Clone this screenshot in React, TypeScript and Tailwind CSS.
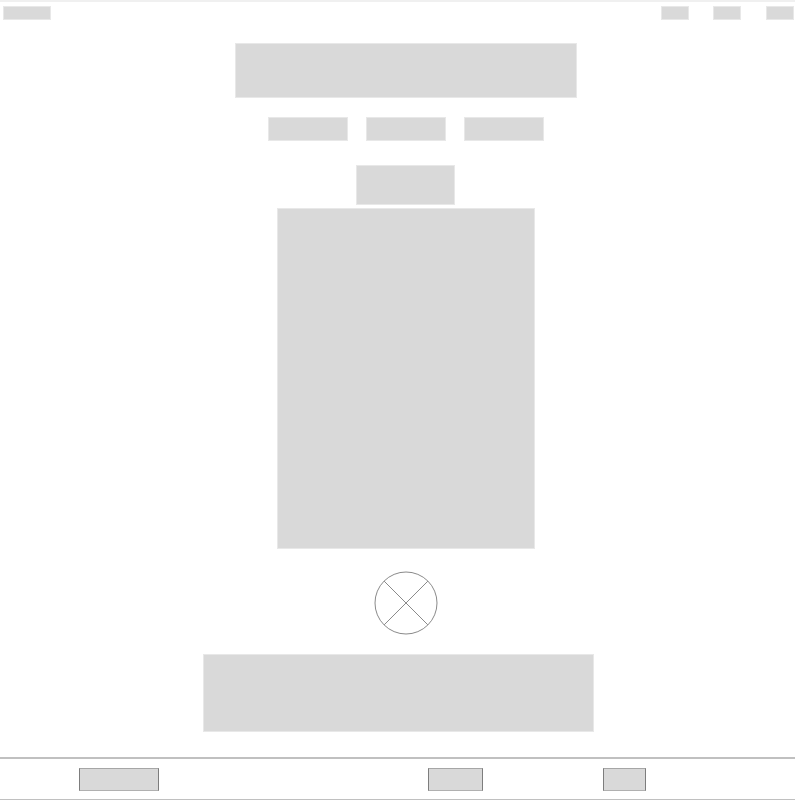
export default function App() {
  const block = "bg-[#d9d9d9] border border-[#e8e8e8]";
  const footBtn = "h-[23px] bg-[#d9d9d9] border border-[#a6a6a6] border-x-[#7d7d7d] border-b-[#b0b0b0]";

  return (
    <div className="w-[795px] h-[800px] bg-white flex flex-col font-['Liberation_Sans',sans-serif] overflow-hidden">
      {/* top bar */}
      <div className="border-t-2 border-[#f0f0f0] pt-[4px] flex items-start">
        <div className={`ml-[3px] w-[48px] h-[14px] ${block}`} />
        <div className="ml-auto flex mr-[1px]">
          <div className={`w-[28px] h-[14px] ${block}`} />
          <div className={`ml-[24px] w-[28px] h-[14px] ${block}`} />
          <div className={`ml-[25px] w-[28px] h-[14px] ${block}`} />
        </div>
      </div>

      {/* main column */}
      <div className="flex flex-col items-center pl-[16px]">
        <div className={`mt-[23px] w-[342px] h-[55px] ${block}`} />

        <div className="mt-[19px] flex gap-[18px]">
          <div className={`w-[80px] h-[24px] ${block}`} />
          <div className={`w-[80px] h-[24px] ${block}`} />
          <div className={`w-[80px] h-[24px] ${block}`} />
        </div>

        <div className={`mt-[24px] w-[99px] h-[40px] ${block}`} />

        <div className={`mt-[3px] w-[258px] h-[341px] ${block}`} />

        <svg className="mt-[22px]" width="64" height="64" viewBox="0 0 64 64">
          <circle cx="32" cy="32" r="31" fill="none" stroke="#8a8a8a" strokeWidth="1" />
          <line x1="10.1" y1="10.1" x2="53.9" y2="53.9" stroke="#8a8a8a" strokeWidth="1" />
          <line x1="53.9" y1="10.1" x2="10.1" y2="53.9" stroke="#8a8a8a" strokeWidth="1" />
        </svg>

        <div className={`mt-[19px] mr-[15px] w-[391px] h-[78px] ${block}`} />
      </div>

      {/* footer */}
      <div className="mt-auto border-t-2 border-[#c0c0c0] pt-[9px] pb-[8px] border-b border-b-[#c0c0c0] flex">
        <div className={`ml-[79px] w-[80px] ${footBtn}`} />
        <div className={`ml-[269px] w-[55px] ${footBtn}`} />
        <div className={`ml-[120px] w-[43px] ${footBtn}`} />
      </div>
    </div>
  );
}
